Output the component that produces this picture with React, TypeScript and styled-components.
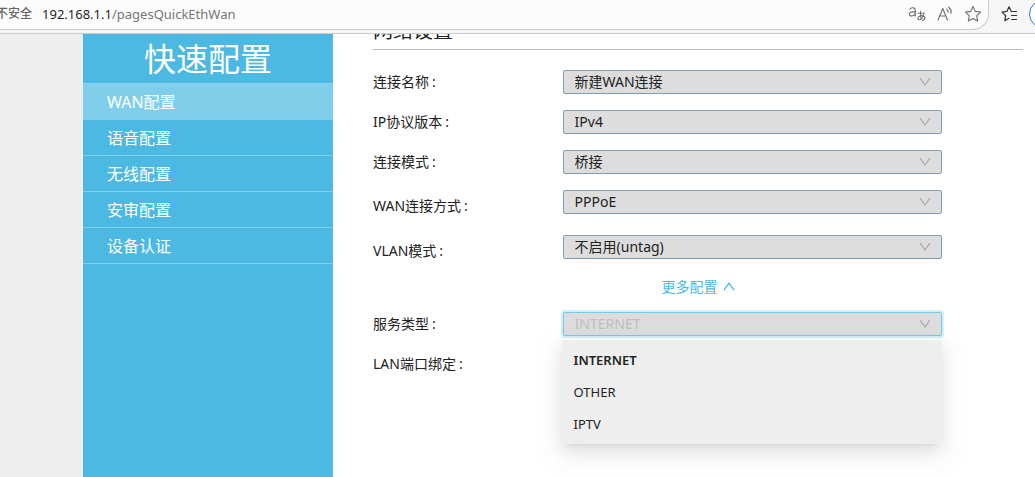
import React, { useState } from "react";
import styled, { createGlobalStyle, css } from "styled-components";

const GlobalStyle = createGlobalStyle`
  *, *::before, *::after { box-sizing: border-box; }
  html, body, #root { height: 100%; }
  body {
    margin: 0;
    background: #fff;
    color: #222;
    font-family: "Noto Sans", "Noto Sans CJK SC", sans-serif;
    font-size: 14px;
    overflow: hidden;
  }
  button, select { font: inherit; }
`;

const Screen = styled.div`
  display: flex;
  flex-direction: column;
  height: 100%;
`;

const BrowserBar = styled.header`
  display: flex;
  flex: none;
  height: 34px;
  background: #f6f6f6;
  border-bottom: 1px solid #ccc;
  overflow: hidden;
`;

const AddressField = styled.div`
  display: flex;
  flex: 1;
  height: 30px;
  padding-right: 1px;
  background: #fcfcfc;
  border: solid #ccc;
  border-width: 0 1px 1px 0;
  border-radius: 0 0 16px 0;
`;

const SecurityNote = styled.span`
  margin-left: -4px;
  margin-right: 10px;
  font-size: 12px;
  font-weight: 500;
  line-height: 28px;
  color: #666;
`;

const Url = styled.span`
  flex: 1;
  font-size: 13px;
  line-height: 29px;
  color: #767676;
  white-space: nowrap;
`;

const Host = styled.span`
  color: #1f1f1f;
`;

const BarButton = styled.button`
  flex: none;
  display: grid;
  place-items: center;
  width: 28px;
  height: 28px;
  padding: 0;
  border: 0;
  background: none;
  color: #707070;
`;

const BarActions = styled.div`
  display: flex;
  flex: none;
  gap: 6px;
  width: 46px;
  padding-left: 6px;
  color: #333;
`;

const ProfileRing = styled.span`
  flex: none;
  width: 28px;
  height: 28px;
  border: 1px solid #2f6fe4;
  border-radius: 50%;
  background: #fff;
`;

const Page = styled.div`
  display: flex;
  flex: 1;
  min-height: 0;
`;

const Margin = styled.div`
  flex: none;
  width: 83px;
  background: #eee;
`;

const Sidebar = styled.nav`
  flex: none;
  width: 250px;
  background: #4cb9e2;
  color: #fff;
`;

const SidebarTitle = styled.h1`
  margin: 0;
  height: 50px;
  border-bottom: 1px solid #8cd5f0;
  font-size: 32px;
  font-weight: 400;
  line-height: 50px;
  text-align: center;
`;

const NavLink = styled.a<{ $active?: boolean }>`
  display: block;
  height: 36px;
  padding-left: 24px;
  border-bottom: 1px solid #7fd0ee;
  background: ${(p) => (p.$active ? "#7fcfeb" : "none")};
  color: #fff;
  font-size: 16px;
  line-height: 36px;
  text-decoration: none;
`;

const Content = styled.main`
  flex: 1;
  min-width: 0;
  padding: 0 12px 0 40px;
`;

const SectionTitle = styled.h2`
  display: flex;
  align-items: flex-end;
  height: 16px;
  margin: 0 0 12px;
  padding-bottom: 6px;
  border-bottom: 1px solid #bbb;
  font-size: 20px;
  font-weight: 400;
  line-height: 24px;
`;

const Clip = styled.div`
  overflow: hidden;
`;

const Row = styled.div<{ $tall?: boolean }>`
  display: grid;
  grid-template-columns: 7fr 14fr 3fr;
  align-items: start;
  height: ${(p) => (p.$tall ? 45 : 40)}px;
`;

const Label = styled.label<{ $tall?: boolean }>`
  line-height: ${(p) => (p.$tall ? 48 : 40)}px;
`;

const Colon = styled.span`
  margin-left: 3px;
`;

const SelectBox = styled.div`
  position: relative;
  padding-top: 8px;
`;

const Select = styled.select<{ $open?: boolean }>`
  display: block;
  appearance: none;
  width: 100%;
  height: 24px;
  padding: 0 28px 0 11px;
  border: 1px solid #7f9db9;
  border-radius: 2px;
  outline: none;
  background: #ddd;
  color: #222;
  line-height: 20px;
  opacity: 1;
  ${(p) =>
    p.$open &&
    css`
      border-color: #74cdec;
      box-shadow: 0 0 0 2px #d5eef8;
      color: #bfbfbf;
    `}
`;

const Arrow = styled.svg`
  position: absolute;
  right: 11px;
  top: 14px;
  pointer-events: none;
`;

const MoreRow = styled.div`
  display: flex;
  justify-content: center;
  height: 32px;
`;

const MoreLink = styled.a`
  display: flex;
  align-items: center;
  gap: 5px;
  height: 28px;
  color: #4cb9e2;
  text-decoration: none;
`;

const Menu = styled.div`
  position: absolute;
  top: 36px;
  left: -1px;
  width: 100%;
  padding: 4px 0;
  border-radius: 2px;
  background: #eee;
  box-shadow:
    0 3px 6px -4px rgba(0, 0, 0, 0.12),
    0 6px 16px rgba(0, 0, 0, 0.08),
    0 9px 28px 8px rgba(0, 0, 0, 0.05);
`;

const MenuItem = styled.button<{ $selected?: boolean }>`
  display: block;
  width: 100%;
  height: 32px;
  padding: 0 12px;
  border: 0;
  background: none;
  color: #222;
  font-size: 13px;
  font-weight: ${(p) => (p.$selected ? 600 : 400)};
  line-height: 32px;
  text-align: left;
`;

const Chevron = () => (
  <Arrow width="12" height="12" viewBox="0 0 12 12" fill="none" stroke="#aaa" strokeWidth="1.2" aria-hidden="true">
    <path d="M1.2 2.2 6 9l4.800-6.800" />
  </Arrow>
);

const TranslateIcon = () => (
  <svg width="18" height="16" viewBox="0 0 18 16" fill="none" stroke="currentColor" strokeWidth="1.1" strokeLinecap="round" aria-hidden="true">
    <path d="M1.900 3.200C2.800 1.300 7.300 1 7.300 4.500V9.900M7.300 5.600C4 5.600 1.200 6 1.200 8 1.200 10.700 6 10.600 7.300 7.500" />
    <path d="M10 7.200h6.600M12.600 5.200c-.2 3.400-.1 6 .6 8.400M15.600 8.500c-.7 3.100-2.600 5.300-4.500 5.300-2.200 0-1.500-4.100 2.400-4.200 4.100 0 4.500 3.900 1.100 4.900" />
  </svg>
);

const ReadAloudIcon = () => (
  <svg width="18" height="16" viewBox="0 0 18 16" fill="none" stroke="currentColor" strokeWidth="1.1" strokeLinecap="round" strokeLinejoin="round" aria-hidden="true">
    <path d="M2 14 6.800 2.500 11.500 14M3.600 10h6.300M10.700 3.200c1 .8 1.500 2 1.400 3.200M12.700 1.200c1.900 1.500 2.700 3.600 2.400 6" />
  </svg>
);

const StarIcon = () => (
  <svg width="18" height="18" viewBox="0 0 18 18" fill="none" stroke="currentColor" strokeWidth="1.1" strokeLinejoin="round" aria-hidden="true">
    <path d="m9 1.500 2.300 4.900 5.300.7-3.900 3.700 1 5.300L9 13.500l-4.700 2.600 1-5.300L1.400 7.100l5.300-.7z" />
  </svg>
);

const FavoritesIcon = () => (
  <svg width="18" height="18" viewBox="0 0 18 18" fill="none" stroke="#333" strokeWidth="1.200" strokeLinecap="round" strokeLinejoin="round" aria-hidden="true">
    <path d="M11.500 6.500H16.500M11.500 10.500h5M11.500 14.500h5M9 13.300l-4.200 2.400.9-5L2 7.100l4.900-.7L9 1.800l2.200 4.500" />
  </svg>
);

const NAV = ["WAN配置", "语音配置", "无线配置", "安审配置", "设备认证"];

const FIELDS = [
  { id: "name", label: "连接名称", value: "新建WAN连接" },
  { id: "ip", label: "IP协议版本", value: "IPv4" },
  { id: "mode", label: "连接模式", value: "桥接" },
  { id: "wan", label: "WAN连接方式", value: "PPPoE", tall: true },
  { id: "vlan", label: "VLAN模式", value: "不启用(untag)", tall: true },
];

const SERVICES = ["INTERNET", "OTHER", "IPTV"];

export default function App() {
  const [service, setService] = useState("INTERNET");

  return (
    <Screen>
      <GlobalStyle />
      <BrowserBar>
        <AddressField>
          <SecurityNote>不安全</SecurityNote>
          <Url>
            <Host>192.168.1.1</Host>/pagesQuickEthWan
          </Url>
          <BarButton aria-label="翻译"><TranslateIcon /></BarButton>
          <BarButton aria-label="大声朗读"><ReadAloudIcon /></BarButton>
          <BarButton aria-label="收藏此页"><StarIcon /></BarButton>
        </AddressField>
        <BarActions>
          <BarButton aria-label="收藏夹"><FavoritesIcon /></BarButton>
          <ProfileRing />
        </BarActions>
      </BrowserBar>
      <Page>
        <Margin />
        <Sidebar>
          <SidebarTitle>快速配置</SidebarTitle>
          {NAV.map((name, i) => (
            <NavLink key={name} href="#" $active={i === 0}>{name}</NavLink>
          ))}
        </Sidebar>
        <Content>
          <Clip>
            <SectionTitle>网络设置</SectionTitle>
          </Clip>
          {FIELDS.map((f) => (
            <Row key={f.id} $tall={f.tall}>
              <Label htmlFor={f.id} $tall={f.tall}>{f.label}<Colon>:</Colon></Label>
              <SelectBox>
                <Select id={f.id}><option>{f.value}</option></Select>
                <Chevron />
              </SelectBox>
            </Row>
          ))}
          <MoreRow>
            <MoreLink href="#">
              更多配置
              <svg width="12" height="12" viewBox="0 0 12 12" fill="none" stroke="currentColor" strokeWidth="1.3" aria-hidden="true">
                <path d="M.8 10.300 6 3l5.200 7.300" />
              </svg>
            </MoreLink>
          </MoreRow>
          <Row>
            <Label htmlFor="service">服务类型<Colon>:</Colon></Label>
            <SelectBox>
              <Select id="service" $open value={service} onChange={(e) => setService(e.target.value)}>
                {SERVICES.map((s) => <option key={s}>{s}</option>)}
              </Select>
              <Chevron />
              <Menu role="listbox" aria-label="服务类型">
                {SERVICES.map((s) => (
                  <MenuItem key={s} role="option" aria-selected={s === service} $selected={s === service} onClick={() => setService(s)}>
                    {s}
                  </MenuItem>
                ))}
              </Menu>
            </SelectBox>
          </Row>
          <Row>
            <Label as="span">LAN端口绑定<Colon>:</Colon></Label>
          </Row>
        </Content>
      </Page>
    </Screen>
  );
}
